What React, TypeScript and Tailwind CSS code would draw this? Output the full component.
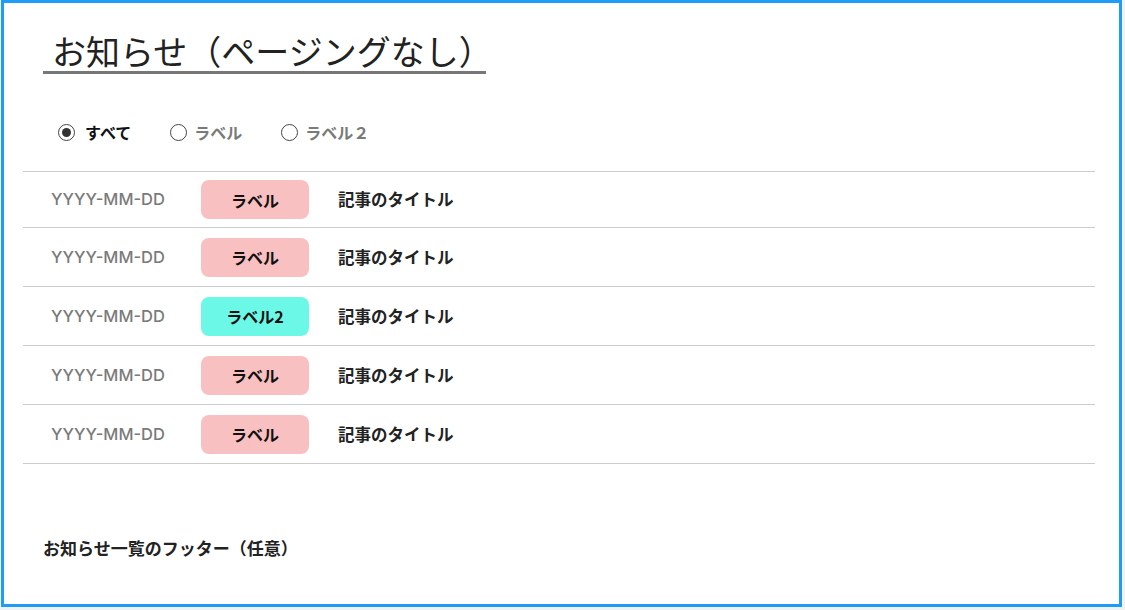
const filters = [
  { id: 'all', label: 'すべて', checked: true },
  { id: 'l1', label: 'ラベル', checked: false },
  { id: 'l2', label: 'ラベル２', checked: false },
];

const news = [
  { id: 1, date: 'YYYY-MM-DD', label: 'ラベル', kind: 'pink', title: '記事のタイトル' },
  { id: 2, date: 'YYYY-MM-DD', label: 'ラベル', kind: 'pink', title: '記事のタイトル' },
  { id: 3, date: 'YYYY-MM-DD', label: 'ラベル2', kind: 'cyan', title: '記事のタイトル' },
  { id: 4, date: 'YYYY-MM-DD', label: 'ラベル', kind: 'pink', title: '記事のタイトル' },
  { id: 5, date: 'YYYY-MM-DD', label: 'ラベル', kind: 'pink', title: '記事のタイトル' },
];

export default function App() {
  return (
    <div
      className="w-[1125px] h-[610px] bg-[#f2f2f2] overflow-hidden"
      style={{ fontFamily: '"Noto Sans CJK JP", "Noto Sans", sans-serif' }}
    >
      <div className="ml-px w-[1121px] h-[607px] bg-white border-[3px] border-[#1f9cf7] pt-[27px] pl-[19px] pr-[24px] flex flex-col">
        <div className="ml-[20px] w-[443px] border-b-[3px] border-[#777777] pl-[9px]">
          <h1 className="text-[34px] leading-[41px] font-normal text-[#222222] whitespace-nowrap">
            お知らせ（ページングなし）
          </h1>
        </div>

        <div className="flex items-center h-[20px] mt-[48px] ml-[35px]">
          {filters.map((f) => (
            <label key={f.id} className="flex items-center mr-[39px]">
              <span className="w-[17px] h-[17px] rounded-full border border-[#444444] flex items-center justify-center">
                {f.checked && <span className="w-[9px] h-[9px] rounded-full bg-[#333333]" />}
              </span>
              <span
                className={
                  f.checked
                    ? 'ml-[10px] text-[16px] font-bold text-[#111111]'
                    : 'ml-[7px] text-[16px] font-bold text-[#7a7a7a]'
                }
              >
                {f.label}
              </span>
            </label>
          ))}
        </div>

        <ul className="mt-[29px] border-t border-[#cccccc] w-[1072px]">
          {news.map((n, i) => (
            <li
              key={n.id}
              className={
                i === 0
                  ? 'h-[56px] border-b border-[#cccccc] flex items-center pl-[28px]'
                  : 'h-[59px] border-b border-[#cccccc] flex items-center pl-[28px]'
              }
            >
              <span
                className="w-[150px] text-[16.5px] font-medium text-[#7a7a7a]"
                style={{ fontFamily: 'Inter, "Liberation Sans", sans-serif' }}
              >
                {n.date}
              </span>
              <span
                className={
                  n.kind === 'cyan'
                    ? 'w-[108px] h-[39px] rounded-[8px] bg-[#6cf8e6] flex items-center justify-center text-[16px] font-bold text-[#111111]'
                    : 'w-[108px] h-[39px] rounded-[8px] bg-[#f8c0c0] flex items-center justify-center text-[16px] font-bold text-[#111111]'
                }
              >
                {n.label}
              </span>
              <span className="ml-[29px] text-[16.5px] font-bold text-[#222222]">{n.title}</span>
            </li>
          ))}
        </ul>

        <p className="mt-[71px] ml-[20px] text-[17px] font-bold text-[#222222]">お知らせ一覧のフッター（任意）</p>
      </div>
    </div>
  );
}
